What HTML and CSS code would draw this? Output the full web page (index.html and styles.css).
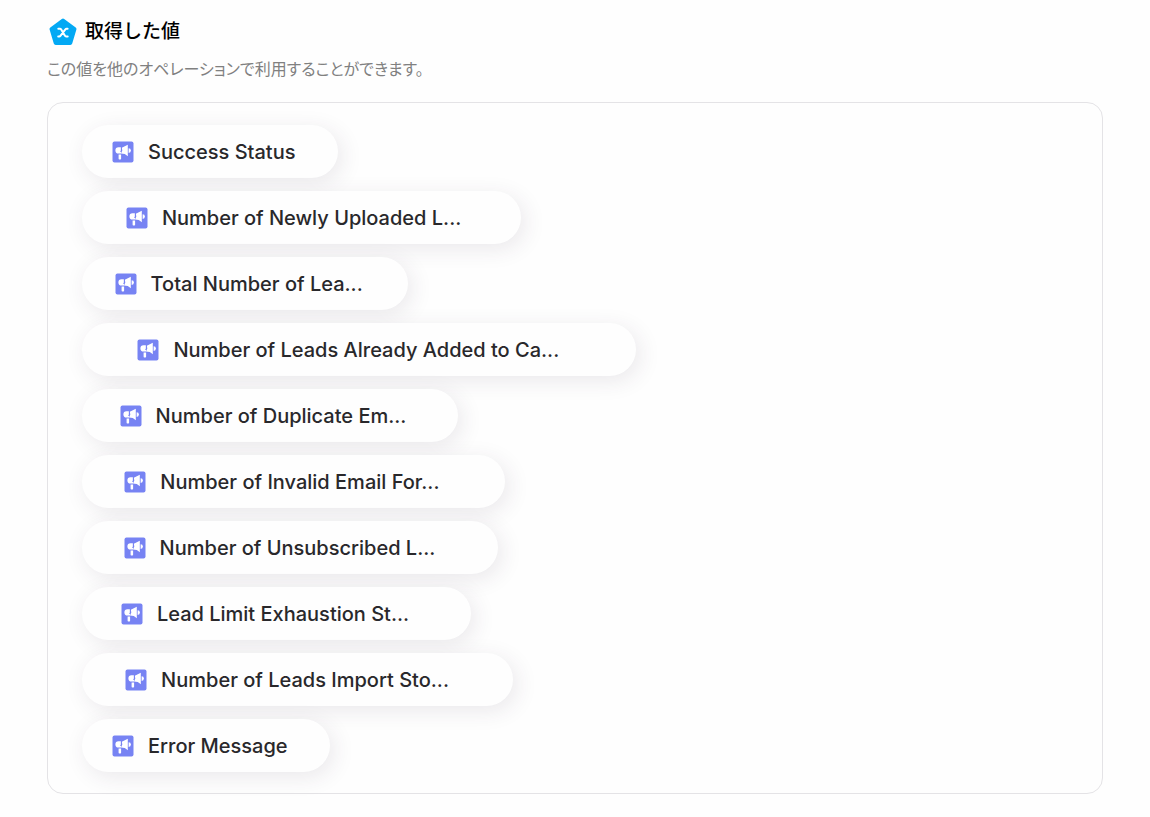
FILE: index.html
```html
<!DOCTYPE html>
<html lang="ja">

<head>
    <meta charset="UTF-8">
    <meta name="viewport" content="width=device-width, initial-scale=1.0">
    <title>取得した値</title>
    <link rel="stylesheet" href="styles.css">
</head>

<body>

    <svg class="sprite" aria-hidden="true">
        <symbol id="megaphone" viewBox="0 0 22 22">
            <rect x="0.5" y="0.5" width="21" height="21" rx="2" fill="#7783f3" />
            <g fill="#fff">
                <path d="M6.500 6.300H9v6.200H6.500a3.100 3.100 0 0 1 0-6.200z" />
                <path d="M9.800 6.800L15.800 3.800V15.200L12.800 12.900L9 12.600L10.300 9.500z" />
                <path d="M16.600 7.300a2.300 2.300 0 0 1 0 4.600z" />
                <path d="M6.600 13.400h2.500v4.400a.7.7 0 0 1-.7.7h-1.100a.7.7 0 0 1-.7-.7z" />
            </g>
            <path d="M9.300 6v3.300l-1 1.500" fill="none" stroke="#7783f3" stroke-width="0.8" />
        </symbol>
    </svg>

    <div class="container">
        <div class="heading">
            <svg class="heading-icon" viewBox="0 0 28 28" aria-hidden="true">
                <path d="M14 2.500L25.500 11L21.300 25H6.700L2.500 11z" fill="#03a9f4" stroke="#03a9f4" stroke-width="4" stroke-linejoin="round" />
                <path d="M9.300 10.800h1.600c.6 0 1 .3 1.300.8l3.600 6c.3.500.7.8 1.300.8h1.600M18.600 10.800h-1c-.6 0-1 .3-1.400.8l-4.600 6c-.4.500-.8.800-1.400.8h-1" fill="none" stroke="#fff" stroke-width="2" stroke-linecap="round" />
            </svg>
            <h2>取得した値</h2>
        </div>
        <p class="description">この値を他のオペレーションで利用することができます。</p>

        <ul class="value-list">
            <li class="success-status"><button class="value-button" type="button"><svg class="value-icon" aria-hidden="true"><use href="#megaphone" /></svg>Success Status</button></li>
            <li class="newly-uploaded"><button class="value-button" type="button"><svg class="value-icon" aria-hidden="true"><use href="#megaphone" /></svg>Number of Newly Uploaded L...</button></li>
            <li class="total-leads"><button class="value-button" type="button"><svg class="value-icon" aria-hidden="true"><use href="#megaphone" /></svg>Total Number of Lea...</button></li>
            <li class="already-added"><button class="value-button" type="button"><svg class="value-icon" aria-hidden="true"><use href="#megaphone" /></svg>Number of Leads Already Added to Ca...</button></li>
            <li class="duplicate-email"><button class="value-button" type="button"><svg class="value-icon" aria-hidden="true"><use href="#megaphone" /></svg>Number of Duplicate Em...</button></li>
            <li class="invalid-email"><button class="value-button" type="button"><svg class="value-icon" aria-hidden="true"><use href="#megaphone" /></svg>Number of Invalid Email For...</button></li>
            <li class="unsubscribed"><button class="value-button" type="button"><svg class="value-icon" aria-hidden="true"><use href="#megaphone" /></svg>Number of Unsubscribed L...</button></li>
            <li class="lead-limit"><button class="value-button" type="button"><svg class="value-icon" aria-hidden="true"><use href="#megaphone" /></svg>Lead Limit Exhaustion St...</button></li>
            <li class="import-stopped"><button class="value-button" type="button"><svg class="value-icon" aria-hidden="true"><use href="#megaphone" /></svg>Number of Leads Import Sto...</button></li>
            <li class="error-message"><button class="value-button" type="button"><svg class="value-icon" aria-hidden="true"><use href="#megaphone" /></svg>Error Message</button></li>
        </ul>
    </div>

</body>

</html>
```
FILE: styles.css
```css
* {
    box-sizing: border-box;
}

body {
    font-family: Inter, "Noto Sans CJK JP", sans-serif;
    background-color: #fefefe;
    margin: 0;
}

.sprite {
    position: absolute;
    width: 0;
    height: 0;
}

.container {
    padding: 16px 47px 24px;
}

.heading {
    display: flex;
    align-items: center;
    gap: 8px;
    padding-left: 2px;
}

.heading-icon {
    width: 28px;
    height: 28px;
}

h2 {
    margin: 0;
    font-size: 19px;
    font-weight: 500;
    line-height: 32px;
    color: #000;
}

.description {
    margin: 9px 0 21px;
    font-size: 16px;
    font-feature-settings: "palt";
    line-height: 24px;
    color: #808080;
}

.value-list {
    display: flex;
    flex-direction: column;
    gap: 13px;
    margin: 0;
    padding: 22px 34px 21px;
    list-style: none;
    border: 1px solid #e4e3e6;
    border-radius: 16px;
}

.value-list li {
    max-width: 100%;
}

.value-button {
    display: flex;
    align-items: center;
    gap: 14px;
    width: 100%;
    height: 53px;
    padding: 0 0 0 max(30px, 10%);
    border: none;
    border-radius: 27px;
    background-color: #fefefe;
    box-shadow: 4px 5px 22px rgba(60, 35, 70, 0.1);
    font-family: inherit;
    font-size: 20px;
    font-weight: 500;
    color: #29282b;
    white-space: nowrap;
    cursor: pointer;
}

.value-icon {
    flex: none;
    width: 22px;
    height: 22px;
}

.success-status {
    width: 256px;
}

.newly-uploaded {
    width: 439px;
}

.total-leads {
    width: 326px;
}

.already-added {
    width: 554px;
}

.duplicate-email {
    width: 376px;
}

.invalid-email {
    width: 423px;
}

.unsubscribed {
    width: 416px;
}

.lead-limit {
    width: 389px;
}

.import-stopped {
    width: 431px;
}

.error-message {
    width: 248px;
}
```
